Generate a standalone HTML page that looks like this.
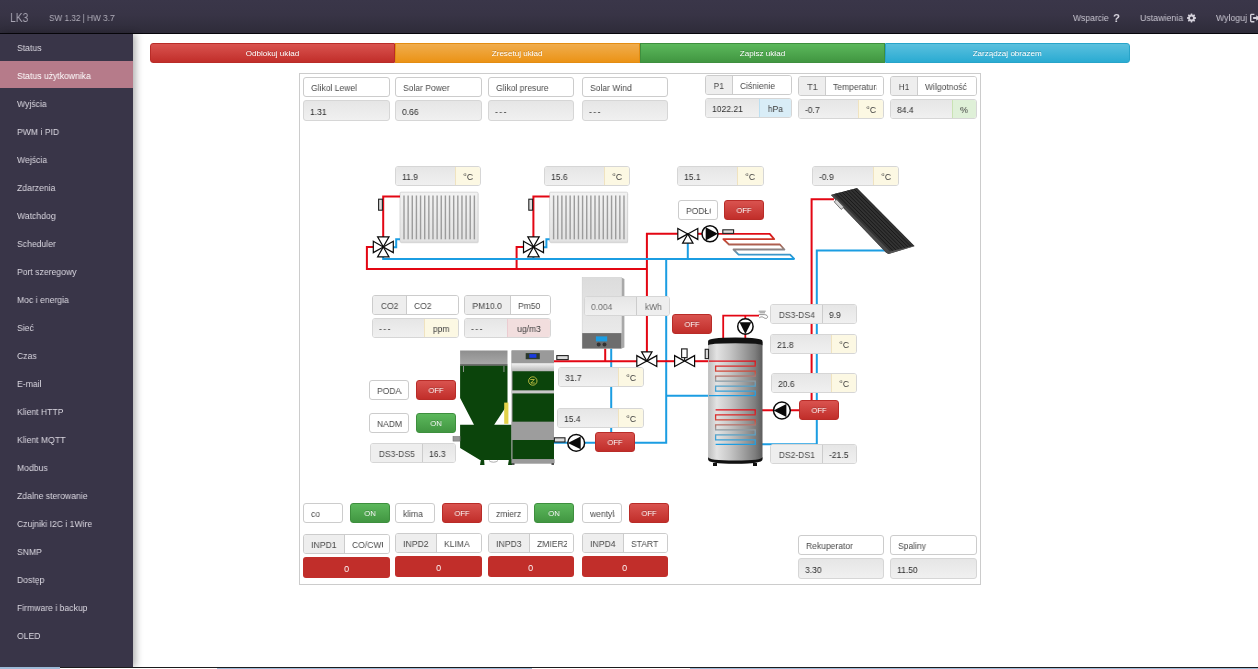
<!DOCTYPE html>
<html lang="pl"><head><meta charset="utf-8"><title>LK3</title>
<style>
*{box-sizing:border-box;margin:0;padding:0}
html,body{width:1258px;height:669px;overflow:hidden;background:#fff}
body{position:relative;font-family:"Liberation Sans",sans-serif;font-size:9.4px;color:#444}
.a{position:absolute}
#hdr{left:0;top:0;width:1258px;height:34px;background:linear-gradient(#3a3649 0,#383446 45%,#2e2b39 100%);border-bottom:1px solid #07060b}
#side{left:0;top:34px;width:133px;height:633px;background:#393548;box-shadow:3px 0 7px rgba(0,0,0,.3)}
.it{position:absolute;left:0;width:133px;height:28px;line-height:28px;padding-left:17px;color:#dbd8e1;font-size:9.4px;white-space:nowrap}
.it.on{background:linear-gradient(#b67b8a,#b67b8a) 0 0/100% 27px no-repeat;color:#fff}
.it .t{position:relative;top:1px}
.t{display:inline-block;transform-origin:0 50%;white-space:nowrap;will-change:transform}
.c .t,.t.c{transform-origin:50% 50%}
.hl{position:absolute;white-space:nowrap;color:#c9c6d1;font-size:9.4px;line-height:12px}
.bb{position:absolute;top:43px;height:20px;width:245px;color:#fff;font-size:8px;line-height:19px;text-align:center;text-shadow:0 -1px 0 rgba(0,0,0,.2)}
#panel{left:299px;top:73px;width:682px;height:512px;border:1px solid #ccc;background:#fff}
.w{position:absolute;border:1px solid #ccc;border-radius:3px;overflow:hidden;font-size:9.4px;white-space:nowrap;background:#fff}
.w>div{position:absolute;top:0;bottom:0;overflow:hidden}
.lb{background:#fff;color:#4a4a4a}
.vb{background:linear-gradient(#e6e6e6,#f0f0f0);border-color:#d6d6d6;color:#2a2a2a}
.w .tx{padding-left:6px}
.w.lb .tx{padding-left:7px}
.w .in.tx{padding-left:8px}
.ds{letter-spacing:1.6px}
.w .t{position:relative;top:.5px}
.va .t,.vb .t{top:1px}
.ad{background:#eee;color:#484848;text-align:center}
.in{background:#fff;color:#4a4a4a}
.va{background:linear-gradient(#e6e6e6,#f0f0f0);color:#2e2e2e}
.u{text-align:center;color:#3c3c3c;border-left:1px solid #ccc}
.cream{background:#fcf8e3;border-left-color:#f0e3c0}
.blue{background:#d9edf7;border-left-color:#bcdff1}
.green{background:#dff0d8;border-left-color:#c9e2b3}
.pink{background:#f2dede;border-left-color:#ebccd1}
.gray{background:#eee}
.lite{color:#6a6a6a}
.w:has(.lite) .va{color:#707070}
.w:has(.lite){border-color:#e0e0e0}
.btn{position:absolute;border-radius:3px;color:#fff;font-size:8px;text-align:center;text-shadow:0 -1px 0 rgba(0,0,0,.2);border:1px solid}
.off{background:linear-gradient(#d9534f,#c12e2a);border-color:#b92c28}
.onb{background:linear-gradient(#5cb85c,#419641);border-color:#3e8f3e}
.bar{position:absolute;background:#c12e2a;border-radius:3px;color:#fff;text-align:center;font-size:9.4px}
</style></head>
<body>
<div id="hdr" class="a"></div>
<div class="hl" style="left:10px;top:11px;font-size:12.2px;line-height:15px;color:#a7a4b2"><span class="t" style="transform:scaleX(0.84)">LK3</span></div>
<div class="hl" style="left:49px;top:12px;color:#b3b0bc"><span class="t" style="transform:scaleX(0.875)">SW 1.32 | HW 3.7</span></div>
<div class="hl" style="left:1073px;top:12px"><span class="t" style="transform:scaleX(0.915)">Wsparcie</span></div>
<div class="hl" style="left:1113px;top:12px;font-weight:bold;font-size:11.5px;color:#d4d1db"><span class="t" style="transform:scaleX(1)">?</span></div>
<div class="hl" style="left:1140px;top:12px"><span class="t" style="transform:scaleX(0.94)">Ustawienia</span></div>
<svg class="a" style="left:1187px;top:13px" width="9" height="10" viewBox="0 0 16 16"><path fill="#d4d1db" d="M6.7 0h2.6l.4 2.1 1.2.5 1.8-1.2 1.9 1.9-1.2 1.8.5 1.2 2.1.4v2.6l-2.1.4-.5 1.2 1.2 1.8-1.9 1.9-1.8-1.2-1.2.5-.4 2.1H6.7l-.4-2.1-1.2-.5-1.8 1.2-1.9-1.9 1.2-1.8-.5-1.2L0 9.300V6.7l2.100-.4.5-1.200L1.400 3.300l1.900-1.900 1.800 1.200 1.200-.5zM8 5.300a2.700 2.700 0 100 5.400 2.700 2.700 0 000-5.400z"/></svg>
<div class="hl" style="left:1216px;top:12px"><span class="t" style="transform:scaleX(0.93)">Wyloguj</span></div>
<svg class="a" style="left:1250px;top:13px" width="10" height="10" viewBox="0 0 16 16"><path fill="#d4d1db" d="M0 3.500C0 2.100 1.100 1 2.500 1H7v2.200H2.500a.3.300 0 00-.3.300v9a.3.300 0 00.3.300H7V15H2.500A2.500 2.500 0 010 12.500zM10 3.500L16 8l-6 4.500V9.500H5v-3h5z"/></svg>
<div id="side" class="a">
<div class="it" style="top:-1px"><span class="t" style="transform:scaleX(0.92)">Status</span></div>
<div class="it on" style="top:27px"><span class="t" style="transform:scaleX(0.92)">Status użytkownika</span></div>
<div class="it" style="top:55px"><span class="t" style="transform:scaleX(0.92)">Wyjścia</span></div>
<div class="it" style="top:83px"><span class="t" style="transform:scaleX(0.92)">PWM i PID</span></div>
<div class="it" style="top:111px"><span class="t" style="transform:scaleX(0.92)">Wejścia</span></div>
<div class="it" style="top:139px"><span class="t" style="transform:scaleX(0.92)">Zdarzenia</span></div>
<div class="it" style="top:167px"><span class="t" style="transform:scaleX(0.92)">Watchdog</span></div>
<div class="it" style="top:195px"><span class="t" style="transform:scaleX(0.92)">Scheduler</span></div>
<div class="it" style="top:223px"><span class="t" style="transform:scaleX(0.92)">Port szeregowy</span></div>
<div class="it" style="top:251px"><span class="t" style="transform:scaleX(0.92)">Moc i energia</span></div>
<div class="it" style="top:279px"><span class="t" style="transform:scaleX(0.92)">Sieć</span></div>
<div class="it" style="top:307px"><span class="t" style="transform:scaleX(0.92)">Czas</span></div>
<div class="it" style="top:335px"><span class="t" style="transform:scaleX(0.92)">E-mail</span></div>
<div class="it" style="top:363px"><span class="t" style="transform:scaleX(0.92)">Klient HTTP</span></div>
<div class="it" style="top:391px"><span class="t" style="transform:scaleX(0.92)">Klient MQTT</span></div>
<div class="it" style="top:419px"><span class="t" style="transform:scaleX(0.92)">Modbus</span></div>
<div class="it" style="top:447px"><span class="t" style="transform:scaleX(0.92)">Zdalne sterowanie</span></div>
<div class="it" style="top:475px"><span class="t" style="transform:scaleX(0.92)">Czujniki I2C i 1Wire</span></div>
<div class="it" style="top:503px"><span class="t" style="transform:scaleX(0.92)">SNMP</span></div>
<div class="it" style="top:531px"><span class="t" style="transform:scaleX(0.92)">Dostęp</span></div>
<div class="it" style="top:559px"><span class="t" style="transform:scaleX(0.92)">Firmware i backup</span></div>
<div class="it" style="top:587px"><span class="t" style="transform:scaleX(0.92)">OLED</span></div>
</div>
<div class="a" style="left:0;top:667px;width:1258px;height:2px;background:#9dbbd8"></div>
<div class="a" style="left:60px;top:667px;width:1198px;height:1px;background:#1c1c1c"></div>
<div class="a" style="left:60px;top:668px;width:157px;height:1px;background:#fff"></div>
<div class="a" style="left:532px;top:668px;width:158px;height:1px;background:#fff"></div>
<div class="bb c" style="left:150px;background:linear-gradient(#d9534f,#c12e2a);border:1px solid #b92c28;border-radius:3px 0 0 3px"><span class="t" style="transform:scaleX(1.01)">Odblokuj układ</span></div>
<div class="bb c" style="left:395px;background:linear-gradient(#f0ad4e,#eb9316);border:1px solid #e38d13;border-radius:0"><span class="t" style="transform:scaleX(1.01)">Zresetuj układ</span></div>
<div class="bb c" style="left:640px;background:linear-gradient(#5cb85c,#419641);border:1px solid #3e8f3e;border-radius:0"><span class="t" style="transform:scaleX(1.01)">Zapisz układ</span></div>
<div class="bb c" style="left:885px;background:linear-gradient(#5bc0de,#2aabd2);border:1px solid #28a4c9;border-radius:0 3px 3px 0"><span class="t" style="transform:scaleX(1.01)">Zarządzaj obrazem</span></div>
<div id="panel" class="a"></div>
<svg class="a" style="left:0;top:0" width="1258" height="669" viewBox="0 0 1258 669">
<defs>
<linearGradient id="gTank" x1="0" x2="1" y1="0" y2="0"><stop offset="0" stop-color="#bcbcbc"/><stop offset=".16" stop-color="#e3e3e3"/><stop offset=".4" stop-color="#c6c6c6"/><stop offset=".65" stop-color="#a0a0a0"/><stop offset=".86" stop-color="#7e7e7e"/><stop offset="1" stop-color="#5c5c5c"/></linearGradient>
<linearGradient id="gCoil" x1="0" x2="0" y1="0" y2="1"><stop offset="0" stop-color="#e30613"/><stop offset=".35" stop-color="#cf4a3a"/><stop offset=".55" stop-color="#9a9a9a"/><stop offset=".75" stop-color="#4aa3d0"/><stop offset="1" stop-color="#1b9de2"/></linearGradient>
<linearGradient id="gRad" x1="0" x2="0" y1="0" y2="1"><stop offset="0" stop-color="#f2f2f2"/><stop offset="1" stop-color="#e2e2e2"/></linearGradient>
<linearGradient id="gHm" x1="0" x2="0" y1="0" y2="1"><stop offset="0" stop-color="#dcdcdc"/><stop offset="1" stop-color="#ededed"/></linearGradient>
<linearGradient id="gLid" x1="0" x2="0" y1="0" y2="1"><stop offset="0" stop-color="#8e8e8e"/><stop offset="1" stop-color="#a8a8a8"/></linearGradient>
<linearGradient id="gSilver" x1="0" x2="0" y1="0" y2="1"><stop offset="0" stop-color="#f4f4f4"/><stop offset="1" stop-color="#b5b5b5"/></linearGradient>
<linearGradient id="gFloor" gradientUnits="userSpaceOnUse" x1="0" x2="0" y1="233" y2="259"><stop offset="0" stop-color="#e30613"/><stop offset=".3" stop-color="#c8422f"/><stop offset=".55" stop-color="#9a7468"/><stop offset=".7" stop-color="#7f8f9c"/><stop offset=".85" stop-color="#2f97cf"/><stop offset="1" stop-color="#1b9de2"/></linearGradient>
</defs>
<rect x="400.5" y="193.2" width="78" height="50" rx="1" fill="#c9c9c9" opacity=".6"/>
<rect x="400" y="192.2" width="78" height="50" rx="1" fill="url(#gRad)" stroke="#cfcfcf" stroke-width=".8"/>
<rect x="403.30" y="195.5" width="1.4" height="43.8" fill="#9c9c9c"/>
<rect x="407.44" y="195.5" width="1.4" height="43.8" fill="#9c9c9c"/>
<rect x="411.58" y="195.5" width="1.4" height="43.8" fill="#9c9c9c"/>
<rect x="415.72" y="195.5" width="1.4" height="43.8" fill="#9c9c9c"/>
<rect x="419.86" y="195.5" width="1.4" height="43.8" fill="#9c9c9c"/>
<rect x="424.00" y="195.5" width="1.4" height="43.8" fill="#9c9c9c"/>
<rect x="428.14" y="195.5" width="1.4" height="43.8" fill="#9c9c9c"/>
<rect x="432.28" y="195.5" width="1.4" height="43.8" fill="#9c9c9c"/>
<rect x="436.42" y="195.5" width="1.4" height="43.8" fill="#9c9c9c"/>
<rect x="440.56" y="195.5" width="1.4" height="43.8" fill="#9c9c9c"/>
<rect x="444.70" y="195.5" width="1.4" height="43.8" fill="#9c9c9c"/>
<rect x="448.84" y="195.5" width="1.4" height="43.8" fill="#9c9c9c"/>
<rect x="452.98" y="195.5" width="1.4" height="43.8" fill="#9c9c9c"/>
<rect x="457.12" y="195.5" width="1.4" height="43.8" fill="#9c9c9c"/>
<rect x="461.26" y="195.5" width="1.4" height="43.8" fill="#9c9c9c"/>
<rect x="465.40" y="195.5" width="1.4" height="43.8" fill="#9c9c9c"/>
<rect x="469.54" y="195.5" width="1.4" height="43.8" fill="#9c9c9c"/>
<rect x="473.68" y="195.5" width="1.4" height="43.8" fill="#9c9c9c"/>
<rect x="550.1" y="193.2" width="78" height="50" rx="1" fill="#c9c9c9" opacity=".6"/>
<rect x="549.6" y="192.2" width="78" height="50" rx="1" fill="url(#gRad)" stroke="#cfcfcf" stroke-width=".8"/>
<rect x="552.90" y="195.5" width="1.4" height="43.8" fill="#9c9c9c"/>
<rect x="557.04" y="195.5" width="1.4" height="43.8" fill="#9c9c9c"/>
<rect x="561.18" y="195.5" width="1.4" height="43.8" fill="#9c9c9c"/>
<rect x="565.32" y="195.5" width="1.4" height="43.8" fill="#9c9c9c"/>
<rect x="569.46" y="195.5" width="1.4" height="43.8" fill="#9c9c9c"/>
<rect x="573.60" y="195.5" width="1.4" height="43.8" fill="#9c9c9c"/>
<rect x="577.74" y="195.5" width="1.4" height="43.8" fill="#9c9c9c"/>
<rect x="581.88" y="195.5" width="1.4" height="43.8" fill="#9c9c9c"/>
<rect x="586.02" y="195.5" width="1.4" height="43.8" fill="#9c9c9c"/>
<rect x="590.16" y="195.5" width="1.4" height="43.8" fill="#9c9c9c"/>
<rect x="594.30" y="195.5" width="1.4" height="43.8" fill="#9c9c9c"/>
<rect x="598.44" y="195.5" width="1.4" height="43.8" fill="#9c9c9c"/>
<rect x="602.58" y="195.5" width="1.4" height="43.8" fill="#9c9c9c"/>
<rect x="606.72" y="195.5" width="1.4" height="43.8" fill="#9c9c9c"/>
<rect x="610.86" y="195.5" width="1.4" height="43.8" fill="#9c9c9c"/>
<rect x="615.00" y="195.5" width="1.4" height="43.8" fill="#9c9c9c"/>
<rect x="619.14" y="195.5" width="1.4" height="43.8" fill="#9c9c9c"/>
<rect x="623.28" y="195.5" width="1.4" height="43.8" fill="#9c9c9c"/>
<path d="M400 196.4H383.2V238" fill="none" stroke="#e30613" stroke-width="2" stroke-linejoin="miter"/>
<path d="M549.6 196.4H533.4V238" fill="none" stroke="#e30613" stroke-width="2" stroke-linejoin="miter"/>
<path d="M374 246.9H366.9V269.1H647" fill="none" stroke="#e30613" stroke-width="2" stroke-linejoin="miter"/>
<path d="M524 246.9H516.6V269.1" fill="none" stroke="#e30613" stroke-width="2" stroke-linejoin="miter"/>
<path d="M678 233.8H646.9V352" fill="none" stroke="#e30613" stroke-width="2" stroke-linejoin="miter"/>
<path d="M698 233.8H702" fill="none" stroke="#e30613" stroke-width="2" stroke-linejoin="miter"/>
<path d="M393 247.2H396.2V239.2H400" fill="none" stroke="#1b9de2" stroke-width="2" stroke-linejoin="miter"/>
<path d="M543 247.2H546.4V239.2H549.6" fill="none" stroke="#1b9de2" stroke-width="2" stroke-linejoin="miter"/>
<path d="M383.2 257V259.1H794.5" fill="none" stroke="#1b9de2" stroke-width="2" stroke-linejoin="miter"/>
<path d="M533.4 257V259.1" fill="none" stroke="#1b9de2" stroke-width="2" stroke-linejoin="miter"/>
<path d="M687.8 243V259.1" fill="none" stroke="#1b9de2" stroke-width="2" stroke-linejoin="miter"/>
<path d="M666.2 259.1V442.7H634" fill="none" stroke="#1b9de2" stroke-width="2" stroke-linejoin="miter"/>
<path d="M596 442.7H554" fill="none" stroke="#1b9de2" stroke-width="2" stroke-linejoin="miter"/>
<path d="M666.2 395.7H712" fill="none" stroke="#1b9de2" stroke-width="2" stroke-linejoin="miter"/>
<path d="M605.2 348V361.2" fill="none" stroke="#e30613" stroke-width="2" stroke-linejoin="miter"/>
<path d="M611.2 348V442.7" fill="none" stroke="#1b9de2" stroke-width="2" stroke-linejoin="miter"/>
<path d="M554 361.2H637" fill="none" stroke="#e30613" stroke-width="2" stroke-linejoin="miter"/>
<path d="M656 361.2H675" fill="none" stroke="#e30613" stroke-width="2" stroke-linejoin="miter"/>
<path d="M694 361.2H712" fill="none" stroke="#e30613" stroke-width="2" stroke-linejoin="miter"/>
<path d="M723.2 340V315.6H759" fill="none" stroke="#e30613" stroke-width="1.8" stroke-linejoin="miter"/>
<path d="M745.3 315.6V340" fill="none" stroke="#e30613" stroke-width="1.8" stroke-linejoin="miter"/>
<path d="M834 199.3H811.6V410.2H790" fill="none" stroke="#e30613" stroke-width="2" stroke-linejoin="miter"/>
<path d="M773 410.2H716" fill="none" stroke="#e30613" stroke-width="2" stroke-linejoin="miter"/>
<path d="M887 250.6H816.8V444.3H716" fill="none" stroke="#1b9de2" stroke-width="2" stroke-linejoin="miter"/>
<path d="M718 233.8H769.7L774.2 239.1H723.3L729 244.5H779.9L784.4 249.5H733.5L738.6 254.6H790.1L794.5 259.1" fill="none" stroke="url(#gFloor)" stroke-width="1.8" stroke-linejoin="round"/>
<polygon points="377.6,236.9 389.0,236.9 383.3,246.9" fill="#fff" stroke="#0a0a0a" stroke-width="1.2" stroke-linejoin="miter"/>
<polygon points="377.6,256.9 389.0,256.9 383.3,246.9" fill="#fff" stroke="#0a0a0a" stroke-width="1.2" stroke-linejoin="miter"/>
<polygon points="373.3,241.2 373.3,252.6 383.3,246.9" fill="#fff" stroke="#0a0a0a" stroke-width="1.2" stroke-linejoin="miter"/>
<polygon points="393.3,241.2 393.3,252.6 383.3,246.9" fill="#fff" stroke="#0a0a0a" stroke-width="1.2" stroke-linejoin="miter"/>
<polygon points="527.8,236.9 539.2,236.9 533.5,246.9" fill="#fff" stroke="#0a0a0a" stroke-width="1.2" stroke-linejoin="miter"/>
<polygon points="527.8,256.9 539.2,256.9 533.5,246.9" fill="#fff" stroke="#0a0a0a" stroke-width="1.2" stroke-linejoin="miter"/>
<polygon points="523.5,241.2 523.5,252.6 533.5,246.9" fill="#fff" stroke="#0a0a0a" stroke-width="1.2" stroke-linejoin="miter"/>
<polygon points="543.5,241.2 543.5,252.6 533.5,246.9" fill="#fff" stroke="#0a0a0a" stroke-width="1.2" stroke-linejoin="miter"/>
<polygon points="677.8,228.4 677.8,239.4 687.8,233.9" fill="#fff" stroke="#0a0a0a" stroke-width="1.2" stroke-linejoin="miter"/>
<polygon points="697.8,228.4 697.8,239.4 687.8,233.9" fill="#fff" stroke="#0a0a0a" stroke-width="1.2" stroke-linejoin="miter"/>
<polygon points="682.6,243.2 693.0,243.2 687.8,233.9" fill="#fff" stroke="#0a0a0a" stroke-width="1.2" stroke-linejoin="miter"/>
<polygon points="636.8,355.6 636.8,366.6 646.8,361.1" fill="#fff" stroke="#0a0a0a" stroke-width="1.2" stroke-linejoin="miter"/>
<polygon points="656.8,355.6 656.8,366.6 646.8,361.1" fill="#fff" stroke="#0a0a0a" stroke-width="1.2" stroke-linejoin="miter"/>
<polygon points="641.6,351.9 652.0,351.9 646.8,361.1" fill="#fff" stroke="#0a0a0a" stroke-width="1.2" stroke-linejoin="miter"/>
<polygon points="674.6,355.6 674.6,366.6 684.6,361.1" fill="#fff" stroke="#0a0a0a" stroke-width="1.2" stroke-linejoin="miter"/>
<polygon points="694.6,355.6 694.6,366.6 684.6,361.1" fill="#fff" stroke="#0a0a0a" stroke-width="1.2" stroke-linejoin="miter"/>
<path d="M684.6 361V357.500" stroke="#222" stroke-width="1.2"/>
<rect x="681.600" y="348.900" width="5.500" height="8.700" fill="#fff" stroke="#2a2a2a" stroke-width="1.2"/>
<circle cx="710" cy="233.8" r="8.0" fill="#fff" stroke="#0a0a0a" stroke-width="1.5"/>
<polygon points="705.7,227.2 705.7,240.4 717.9,233.8" fill="#0a0a0a"/>
<circle cx="745.4" cy="326.5" r="7.7" fill="#fff" stroke="#0a0a0a" stroke-width="1.5"/>
<polygon points="739.5,322.3 751.3,322.3 745.4,334.1" fill="#0a0a0a"/>
<circle cx="576.2" cy="442.9" r="8.4" fill="#fff" stroke="#0a0a0a" stroke-width="1.5"/>
<polygon points="580.7,436.5 580.7,449.3 567.9,442.9" fill="#0a0a0a"/>
<circle cx="781.9" cy="410.5" r="8.4" fill="#fff" stroke="#0a0a0a" stroke-width="1.5"/>
<polygon points="786.4,404.1 786.4,416.9 773.6,410.5" fill="#0a0a0a"/>
<path d="M758.7 311.2h7M759.5 312.800h5.500M758.700 314.600h5.500c2.500 0 4 1.500 3.200 3c-.8 1.300-2.600 .9-3.700 0c-1.300-1-2.800-1-4.500 .2" stroke="#777" stroke-width=".8" fill="none"/>
<polygon points="831,195 857,188 914.5,246 888.5,254 886,252.5" fill="#3a3a3a"/>
<polygon points="833,194.3 857,188.200 914,245.8 890,251.500" fill="#323232"/>
<line x1="836.0" y1="193.5" x2="893.0" y2="250.8" stroke="#151515" stroke-width=".9"/>
<line x1="839.0" y1="192.8" x2="896.0" y2="250.1" stroke="#151515" stroke-width=".9"/>
<line x1="842.0" y1="192.0" x2="899.0" y2="249.4" stroke="#151515" stroke-width=".9"/>
<line x1="845.0" y1="191.2" x2="902.0" y2="248.7" stroke="#151515" stroke-width=".9"/>
<line x1="848.0" y1="190.5" x2="905.0" y2="247.9" stroke="#151515" stroke-width=".9"/>
<line x1="851.0" y1="189.7" x2="908.0" y2="247.2" stroke="#151515" stroke-width=".9"/>
<line x1="854.0" y1="189.0" x2="911.0" y2="246.5" stroke="#151515" stroke-width=".9"/>
<polygon points="831,195 886,252.500 888.500,254 890,251.500 833,194.300" fill="#4a4a4a"/>
<polygon points="888.500,254 914.500,246.200 914,245.800 890,251.500" fill="#555"/>
<polygon points="834.2,201.8 836.8,199.6 843.8,207.1 841.2,209.4" fill="#d6d6d6" stroke="#444" stroke-width=".7"/>
<polygon points="621.5,277.5 624.4,279 624.4,347.5 621.5,348.5" fill="#a9a9a9"/>
<rect x="582.2" y="277.5" width="39.3" height="71" fill="url(#gHm)" stroke="#cfcfcf" stroke-width=".6"/>
<rect x="582.2" y="333.1" width="39.3" height="15.4" fill="#6d6d6d"/>
<rect x="595.9" y="336.4" width="11.3" height="5" fill="#1b9de2"/>
<circle cx="598.7" cy="344.6" r="2" fill="#333"/><circle cx="604.5" cy="344.6" r="2" fill="#333"/>
<rect x="460.1" y="350.5" width="47.4" height="14" fill="url(#gLid)"/>
<rect x="460.1" y="364.2" width="47.4" height="1.6" fill="#555"/>
<polygon points="460.1,365.8 507.5,365.8 507.5,404.5 494.200,424.800 511.600,424.800 511.600,460.100 480,460.100 460.100,448 460.100,424.800 474,424.800 460.100,398" fill="#0b440b"/>
<rect x="463" y="366" width=".9" height="6" fill="#9a9a9a"/><rect x="503.5" y="366" width=".9" height="6" fill="#9a9a9a"/>
<rect x="504.2" y="402.600" width="4.200" height="21.200" fill="#e2d24a"/>
<rect x="453" y="436.500" width="7.100" height="4.600" fill="#9a9a9a" stroke="#666" stroke-width=".5"/>
<polygon points="481,459 484,459 484.500,465 480,465" fill="#0b440b"/><polygon points="509,459 512,459 512.500,465 508,465" fill="#0b440b"/>
<path d="M489 460.500a5 3 0 0 0 9 0" fill="none" stroke="#888" stroke-width=".7"/>
<rect x="511.6" y="350.5" width="42.4" height="113" fill="#8a8a8a"/>
<rect x="511.6" y="350.5" width="42.4" height="12.7" fill="#9a9a9a"/>
<rect x="525.7" y="353.1" width="14.1" height="6.1" fill="#2c3a2c"/><rect x="529.3" y="354.1" width="7.1" height="3.7" fill="#1a3be0"/>
<rect x="511.6" y="363.2" width="42.4" height="8.1" fill="url(#gSilver)"/>
<rect x="512.6" y="371.3" width="41.4" height="19.2" fill="#0b440b"/>
<circle cx="532.8" cy="381" r="4.2" fill="none" stroke="#d8d04a" stroke-width=".8"/><path d="M530.300 379.500h4l-3.500 3.500h4" fill="none" stroke="#d8d04a" stroke-width=".8"/>
<rect x="511.6" y="390.5" width="42.4" height="3" fill="#c9c9c9"/>
<rect x="512.6" y="393.5" width="41.4" height="28.3" fill="#0b440b"/>
<rect x="511.6" y="421.8" width="42.4" height="18.2" fill="#9d9d9d"/>
<rect x="512.6" y="440" width="41.4" height="19.1" fill="#0b440b"/>
<rect x="511.6" y="459.1" width="43" height="4.200" fill="#9a9a9a"/>
<rect x="512" y="463" width="2.500" height="2" fill="#555"/><rect x="551.500" y="463" width="2.500" height="2" fill="#555"/>
<rect x="713" y="463" width="4" height="3" fill="#111"/><rect x="753" y="463" width="4" height="3" fill="#111"/>
<path d="M708.1 342V458Q708.100 463.600 735.300 463.600Q762.500 463.600 762.500 458V342z" fill="url(#gTank)"/>
<path d="M708.1 457V459.500Q708.100 463.800 735.300 463.800Q762.500 463.800 762.500 459.500V457Q762.500 460.500 735.300 460.500Q708.100 460.500 708.100 457z" fill="#111"/>
<path d="M708.1 345.5V341Q708.100 337.400 735.300 337.400Q762.500 337.400 762.500 341V345.500Q762.500 343.200 735.300 343.200Q708.100 343.200 708.100 345.500z" fill="#111"/>
<linearGradient id="gc1" gradientUnits="userSpaceOnUse" x1="0" x2="0" y1="360" y2="396"><stop offset="0" stop-color="#e30613"/><stop offset=".35" stop-color="#d0503f"/><stop offset=".55" stop-color="#9a9a9a"/><stop offset=".75" stop-color="#4aa3d0"/><stop offset="1" stop-color="#1b9de2"/></linearGradient>
<linearGradient id="gc2" gradientUnits="userSpaceOnUse" x1="0" x2="0" y1="409" y2="445"><stop offset="0" stop-color="#e30613"/><stop offset=".35" stop-color="#d0503f"/><stop offset=".55" stop-color="#9a9a9a"/><stop offset=".75" stop-color="#4aa3d0"/><stop offset="1" stop-color="#1b9de2"/></linearGradient>
<path d="M709 361.2H755.2V366.2H715.6V371.2H755.2V376.2H715.6V381.2H755.2V386.2H715.6V391.2H755.2V395.7H709" fill="none" stroke="url(#gc1)" stroke-width="1.300"/>
<path d="M715.6 409.9H755.2V414.9H715.6V419.9H755.2V424.9H715.6V429.9H755.2V434.9H715.6V439.8H755.2V444.3H715.6" fill="none" stroke="url(#gc2)" stroke-width="1.300"/>
<rect x="378.6" y="199.2" width="3.8" height="11" fill="#dcdcdc" stroke="#222" stroke-width="1.1"/>
<rect x="528.8" y="199.2" width="3.8" height="11" fill="#dcdcdc" stroke="#222" stroke-width="1.1"/>
<rect x="722.8" y="229.8" width="10.8" height="3.6" fill="#dcdcdc" stroke="#222" stroke-width="1.1"/>
<rect x="556.8" y="355.6" width="11.4" height="4" fill="#dcdcdc" stroke="#222" stroke-width="1.1"/>
<rect x="554.4" y="437.8" width="10.6" height="4.2" fill="#dcdcdc" stroke="#222" stroke-width="1.1"/>
<rect x="705.2" y="349.3" width="3.3" height="9.3" fill="#dcdcdc" stroke="#222" stroke-width="1.1"/>
</svg>
<div class="w lb" style="left:303px;top:77px;width:87px;height:20px;line-height:18px"><div class="tx" style="left:0;right:0"><span class="t" style="transform:scaleX(0.91)">Glikol Lewel</span></div></div>
<div class="w vb" style="left:303px;top:100px;width:87px;height:21px;line-height:19px"><div class="tx" style="left:0;right:0"><span class="t" style="transform:scaleX(0.91)">1.31</span></div></div>
<div class="w lb" style="left:395px;top:77px;width:87px;height:20px;line-height:18px"><div class="tx" style="left:0;right:0"><span class="t" style="transform:scaleX(0.91)">Solar Power</span></div></div>
<div class="w vb" style="left:395px;top:100px;width:87px;height:21px;line-height:19px"><div class="tx" style="left:0;right:0"><span class="t" style="transform:scaleX(0.91)">0.66</span></div></div>
<div class="w lb" style="left:488px;top:77px;width:86px;height:20px;line-height:18px"><div class="tx" style="left:0;right:0"><span class="t" style="transform:scaleX(0.91)">Glikol presure</span></div></div>
<div class="w vb" style="left:488px;top:100px;width:86px;height:21px;line-height:19px"><div class="tx" style="left:0;right:0"><span class="t ds" style="transform:scaleX(0.91)">---</span></div></div>
<div class="w lb" style="left:582px;top:77px;width:86px;height:20px;line-height:18px"><div class="tx" style="left:0;right:0"><span class="t" style="transform:scaleX(0.91)">Solar Wind</span></div></div>
<div class="w vb" style="left:582px;top:100px;width:86px;height:21px;line-height:19px"><div class="tx" style="left:0;right:0"><span class="t ds" style="transform:scaleX(0.91)">---</span></div></div>
<div class="w" style="left:705px;top:75px;width:87px;height:20px;line-height:18px"><div class="ad c" style="left:0;width:27px;border-right:1px solid #ccc"><span class="t" style="transform:scaleX(0.91)">P1</span></div><div class="in" style="left:27px;right:0"><div class="tx" style="position:absolute;left:0;right:6px;top:0;bottom:0;overflow:hidden;padding-left:7px"><span class="t" style="transform:scaleX(0.91)">Ciśnienie</span></div></div></div>
<div class="w" style="left:705px;top:98px;width:87px;height:20px;line-height:18px;border-color:#d6d6d6"><div class="va tx" style="left:0;right:32px"><span class="t" style="transform:scaleX(0.91)">1022.21</span></div><div class="u c blue" style="right:0;width:32px"><span class="t" style="transform:scaleX(0.91)">hPa</span></div></div>
<div class="w" style="left:798px;top:76px;width:86px;height:20px;line-height:18px"><div class="ad c" style="left:0;width:27px;border-right:1px solid #ccc"><span class="t" style="transform:scaleX(0.91)">T1</span></div><div class="in" style="left:27px;right:0"><div class="tx" style="position:absolute;left:0;right:6px;top:0;bottom:0;overflow:hidden;padding-left:7px"><span class="t" style="transform:scaleX(0.91)">Temperatura</span></div></div></div>
<div class="w" style="left:798px;top:99px;width:86px;height:20px;line-height:18px;border-color:#d6d6d6"><div class="va tx" style="left:0;right:25px"><span class="t" style="transform:scaleX(0.91)">-0.7</span></div><div class="u c cream" style="right:0;width:25px"><span class="t" style="transform:scaleX(0.91)">°C</span></div></div>
<div class="w" style="left:890px;top:76px;width:87px;height:20px;line-height:18px"><div class="ad c" style="left:0;width:27px;border-right:1px solid #ccc"><span class="t" style="transform:scaleX(0.91)">H1</span></div><div class="in" style="left:27px;right:0"><div class="tx" style="position:absolute;left:0;right:6px;top:0;bottom:0;overflow:hidden;padding-left:7px"><span class="t" style="transform:scaleX(0.91)">Wilgotność</span></div></div></div>
<div class="w" style="left:890px;top:99px;width:87px;height:20px;line-height:18px;border-color:#d6d6d6"><div class="va tx" style="left:0;right:24px"><span class="t" style="transform:scaleX(0.91)">84.4</span></div><div class="u c green" style="right:0;width:24px"><span class="t" style="transform:scaleX(0.91)">%</span></div></div>
<div class="w" style="left:395px;top:166px;width:86px;height:20px;line-height:18px;border-color:#d6d6d6"><div class="va tx" style="left:0;right:25px"><span class="t" style="transform:scaleX(0.91)">11.9</span></div><div class="u c cream" style="right:0;width:25px"><span class="t" style="transform:scaleX(0.91)">°C</span></div></div>
<div class="w" style="left:544px;top:166px;width:86px;height:20px;line-height:18px;border-color:#d6d6d6"><div class="va tx" style="left:0;right:25px"><span class="t" style="transform:scaleX(0.91)">15.6</span></div><div class="u c cream" style="right:0;width:25px"><span class="t" style="transform:scaleX(0.91)">°C</span></div></div>
<div class="w" style="left:677px;top:166px;width:87px;height:20px;line-height:18px;border-color:#d6d6d6"><div class="va tx" style="left:0;right:26px"><span class="t" style="transform:scaleX(0.91)">15.1</span></div><div class="u c cream" style="right:0;width:26px"><span class="t" style="transform:scaleX(0.91)">°C</span></div></div>
<div class="w" style="left:812px;top:166px;width:87px;height:20px;line-height:18px;border-color:#d6d6d6"><div class="va tx" style="left:0;right:25px"><span class="t" style="transform:scaleX(0.91)">-0.9</span></div><div class="u c cream" style="right:0;width:25px"><span class="t" style="transform:scaleX(0.91)">°C</span></div></div>
<div class="w lb" style="left:678px;top:200px;width:40px;height:20px;line-height:18px"><div class="tx" style="left:0;right:6px;padding-left:7px"><span class="t" style="transform:scaleX(0.91)">PODŁOGA</span></div></div>
<div class="btn c off" style="left:724px;top:200px;width:40px;height:20px;line-height:19.5px"><span class="t" style="transform:scaleX(0.94)">OFF</span></div>
<div class="w" style="left:372px;top:295px;width:87px;height:20px;line-height:18px"><div class="ad c" style="left:0;width:34px;border-right:1px solid #ccc"><span class="t" style="transform:scaleX(0.91)">CO2</span></div><div class="in" style="left:34px;right:0"><div class="tx" style="position:absolute;left:0;right:6px;top:0;bottom:0;overflow:hidden;padding-left:7px"><span class="t" style="transform:scaleX(0.91)">CO2</span></div></div></div>
<div class="w" style="left:372px;top:318px;width:87px;height:20px;line-height:18px;border-color:#d6d6d6"><div class="va tx" style="left:0;right:34px"><span class="t ds" style="transform:scaleX(0.91)">---</span></div><div class="u c cream" style="right:0;width:34px"><span class="t" style="transform:scaleX(0.91)">ppm</span></div></div>
<div class="w" style="left:464px;top:295px;width:87px;height:20px;line-height:18px"><div class="ad c" style="left:0;width:46px;border-right:1px solid #ccc"><span class="t" style="transform:scaleX(0.91)">PM10.0</span></div><div class="in" style="left:46px;right:0"><div class="tx" style="position:absolute;left:0;right:6px;top:0;bottom:0;overflow:hidden;padding-left:7px"><span class="t" style="transform:scaleX(0.91)">Pm50</span></div></div></div>
<div class="w" style="left:464px;top:318px;width:87px;height:20px;line-height:18px;border-color:#d6d6d6"><div class="va tx" style="left:0;right:43px"><span class="t ds" style="transform:scaleX(0.91)">---</span></div><div class="u c pink" style="right:0;width:43px"><span class="t" style="transform:scaleX(0.91)">ug/m3</span></div></div>
<div class="w" style="left:584px;top:296px;width:86px;height:20px;line-height:18px;border-color:#d6d6d6"><div class="va tx" style="left:0;right:33px"><span class="t" style="transform:scaleX(0.91)">0.004</span></div><div class="u c gray lite" style="right:0;width:33px"><span class="t" style="transform:scaleX(0.91)">kWh</span></div></div>
<div class="btn c off" style="left:672px;top:314px;width:40px;height:20px;line-height:19.5px"><span class="t" style="transform:scaleX(0.94)">OFF</span></div>
<div class="w" style="left:770px;top:304px;width:87px;height:20px;line-height:18px;border-color:#d6d6d6"><div class="ad c" style="left:0;width:52px;border-right:1px solid #ccc"><span class="t" style="transform:scaleX(0.91)">DS3-DS4</span></div><div class="va tx" style="left:52px;right:0"><span class="t" style="transform:scaleX(0.91)">9.9</span></div></div>
<div class="w" style="left:770px;top:334px;width:87px;height:20px;line-height:18px;border-color:#d6d6d6"><div class="va tx" style="left:0;right:25px"><span class="t" style="transform:scaleX(0.91)">21.8</span></div><div class="u c cream" style="right:0;width:25px"><span class="t" style="transform:scaleX(0.91)">°C</span></div></div>
<div class="w" style="left:771px;top:373px;width:86px;height:20px;line-height:18px;border-color:#d6d6d6"><div class="va tx" style="left:0;right:25px"><span class="t" style="transform:scaleX(0.91)">20.6</span></div><div class="u c cream" style="right:0;width:25px"><span class="t" style="transform:scaleX(0.91)">°C</span></div></div>
<div class="btn c off" style="left:799px;top:400px;width:40px;height:20px;line-height:19.5px"><span class="t" style="transform:scaleX(0.94)">OFF</span></div>
<div class="w" style="left:770px;top:444px;width:87px;height:20px;line-height:18px;border-color:#d6d6d6"><div class="ad c" style="left:0;width:52px;border-right:1px solid #ccc"><span class="t" style="transform:scaleX(0.91)">DS2-DS1</span></div><div class="va tx" style="left:52px;right:0"><span class="t" style="transform:scaleX(0.91)">-21.5</span></div></div>
<div class="w lb" style="left:369px;top:380px;width:40px;height:20px;line-height:18px"><div class="tx" style="left:0;right:6px;padding-left:7px"><span class="t" style="transform:scaleX(0.91)">PODAJNIK</span></div></div>
<div class="btn c off" style="left:416px;top:380px;width:40px;height:20px;line-height:19.5px"><span class="t" style="transform:scaleX(0.94)">OFF</span></div>
<div class="w lb" style="left:369px;top:413px;width:40px;height:20px;line-height:18px"><div class="tx" style="left:0;right:6px;padding-left:7px"><span class="t" style="transform:scaleX(0.91)">NADMUCH</span></div></div>
<div class="btn c onb" style="left:416px;top:413px;width:40px;height:20px;line-height:19.5px"><span class="t" style="transform:scaleX(0.94)">ON</span></div>
<div class="w" style="left:370px;top:443px;width:86px;height:20px;line-height:18px;border-color:#d6d6d6"><div class="ad c" style="left:0;width:52px;border-right:1px solid #ccc"><span class="t" style="transform:scaleX(0.91)">DS3-DS5</span></div><div class="va tx" style="left:52px;right:0"><span class="t" style="transform:scaleX(0.91)">16.3</span></div></div>
<div class="w" style="left:558px;top:367px;width:86px;height:20px;line-height:18px;border-color:#d6d6d6"><div class="va tx" style="left:0;right:25px"><span class="t" style="transform:scaleX(0.91)">31.7</span></div><div class="u c cream" style="right:0;width:25px"><span class="t" style="transform:scaleX(0.91)">°C</span></div></div>
<div class="w" style="left:557px;top:408px;width:87px;height:20px;line-height:18px;border-color:#d6d6d6"><div class="va tx" style="left:0;right:25px"><span class="t" style="transform:scaleX(0.91)">15.4</span></div><div class="u c cream" style="right:0;width:25px"><span class="t" style="transform:scaleX(0.91)">°C</span></div></div>
<div class="btn c off" style="left:595px;top:432px;width:40px;height:20px;line-height:19.5px"><span class="t" style="transform:scaleX(0.94)">OFF</span></div>
<div class="w lb" style="left:303px;top:503px;width:40px;height:20px;line-height:18px"><div class="tx" style="left:0;right:6px;padding-left:7px"><span class="t" style="transform:scaleX(0.91)">co</span></div></div>
<div class="btn c onb" style="left:350px;top:503px;width:40px;height:20px;line-height:19.5px"><span class="t" style="transform:scaleX(0.94)">ON</span></div>
<div class="w lb" style="left:395px;top:503px;width:40px;height:20px;line-height:18px"><div class="tx" style="left:0;right:6px;padding-left:7px"><span class="t" style="transform:scaleX(0.91)">klima</span></div></div>
<div class="btn c off" style="left:442px;top:503px;width:40px;height:20px;line-height:19.5px"><span class="t" style="transform:scaleX(0.94)">OFF</span></div>
<div class="w lb" style="left:488px;top:503px;width:40px;height:20px;line-height:18px"><div class="tx" style="left:0;right:6px;padding-left:7px"><span class="t" style="transform:scaleX(0.91)">zmierzch</span></div></div>
<div class="btn c onb" style="left:534px;top:503px;width:40px;height:20px;line-height:19.5px"><span class="t" style="transform:scaleX(0.94)">ON</span></div>
<div class="w lb" style="left:582px;top:503px;width:40px;height:20px;line-height:18px"><div class="tx" style="left:0;right:6px;padding-left:7px"><span class="t" style="transform:scaleX(0.91)">wentylator</span></div></div>
<div class="btn c off" style="left:629px;top:503px;width:40px;height:20px;line-height:19.5px"><span class="t" style="transform:scaleX(0.94)">OFF</span></div>
<div class="w" style="left:303px;top:534px;width:87px;height:20px;line-height:18px"><div class="ad c" style="left:0;width:41px;border-right:1px solid #ccc"><span class="t" style="transform:scaleX(0.91)">INPD1</span></div><div class="in" style="left:41px;right:0"><div class="tx" style="position:absolute;left:0;right:6px;top:0;bottom:0;overflow:hidden;padding-left:7px"><span class="t" style="transform:scaleX(0.91)">CO/CWU</span></div></div></div>
<div class="bar c" style="left:303px;top:557px;width:87px;height:21px;line-height:23px"><span class="t" style="transform:scaleX(0.91)">0</span></div>
<div class="w" style="left:395px;top:533px;width:87px;height:20px;line-height:18px"><div class="ad c" style="left:0;width:41px;border-right:1px solid #ccc"><span class="t" style="transform:scaleX(0.91)">INPD2</span></div><div class="in" style="left:41px;right:0"><div class="tx" style="position:absolute;left:0;right:6px;top:0;bottom:0;overflow:hidden;padding-left:7px"><span class="t" style="transform:scaleX(0.91)">KLIMA</span></div></div></div>
<div class="bar c" style="left:395px;top:556px;width:87px;height:21px;line-height:23px"><span class="t" style="transform:scaleX(0.91)">0</span></div>
<div class="w" style="left:488px;top:533px;width:86px;height:20px;line-height:18px"><div class="ad c" style="left:0;width:41px;border-right:1px solid #ccc"><span class="t" style="transform:scaleX(0.91)">INPD3</span></div><div class="in" style="left:41px;right:0"><div class="tx" style="position:absolute;left:0;right:6px;top:0;bottom:0;overflow:hidden;padding-left:7px"><span class="t" style="transform:scaleX(0.91)">ZMIERZ</span></div></div></div>
<div class="bar c" style="left:488px;top:556px;width:86px;height:21px;line-height:23px"><span class="t" style="transform:scaleX(0.91)">0</span></div>
<div class="w" style="left:582px;top:533px;width:86px;height:20px;line-height:18px"><div class="ad c" style="left:0;width:41px;border-right:1px solid #ccc"><span class="t" style="transform:scaleX(0.91)">INPD4</span></div><div class="in" style="left:41px;right:0"><div class="tx" style="position:absolute;left:0;right:6px;top:0;bottom:0;overflow:hidden;padding-left:7px"><span class="t" style="transform:scaleX(0.91)">START</span></div></div></div>
<div class="bar c" style="left:582px;top:556px;width:86px;height:21px;line-height:23px"><span class="t" style="transform:scaleX(0.91)">0</span></div>
<div class="w lb" style="left:798px;top:535px;width:86px;height:20px;line-height:18px"><div class="tx" style="left:0;right:0"><span class="t" style="transform:scaleX(0.91)">Rekuperator</span></div></div>
<div class="w vb" style="left:798px;top:558px;width:86px;height:21px;line-height:19px"><div class="tx" style="left:0;right:0"><span class="t" style="transform:scaleX(0.91)">3.30</span></div></div>
<div class="w lb" style="left:890px;top:535px;width:87px;height:20px;line-height:18px"><div class="tx" style="left:0;right:0"><span class="t" style="transform:scaleX(0.91)">Spaliny</span></div></div>
<div class="w vb" style="left:890px;top:558px;width:87px;height:21px;line-height:19px"><div class="tx" style="left:0;right:0"><span class="t" style="transform:scaleX(0.91)">11.50</span></div></div>
</body></html>
